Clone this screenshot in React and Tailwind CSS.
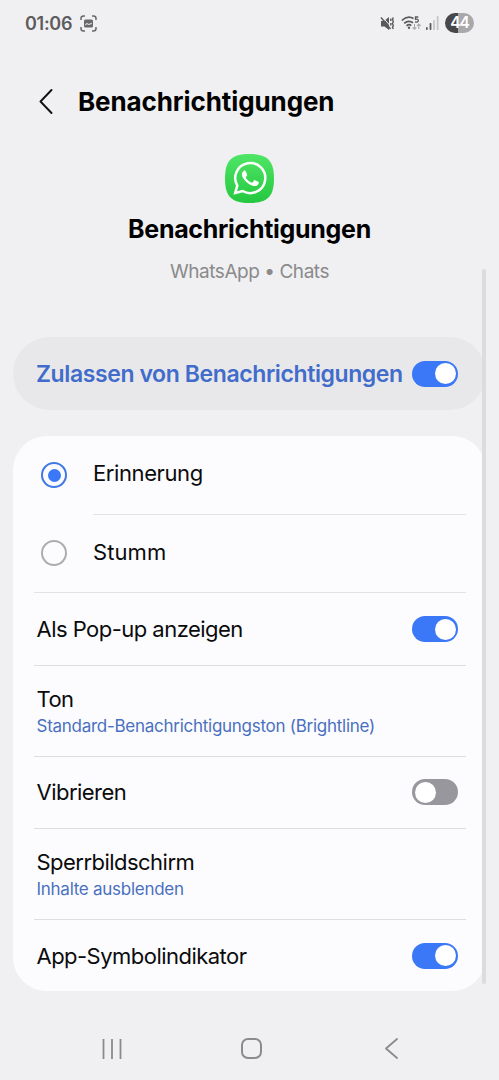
function Toggle({ on }) {
  return (
    <div
      className={
        on
          ? "flex h-[26px] w-[46px] shrink-0 items-center justify-end rounded-full bg-[#3a78f7] px-[2.5px]"
          : "flex h-[26px] w-[46px] shrink-0 items-center justify-start rounded-full bg-[#98979d] px-[2.5px]"
      }
    >
      <div className="size-[21px] rounded-full bg-white" />
    </div>
  );
}

function Radio({ checked }) {
  return checked ? (
    <div className="flex size-[26px] items-center justify-center rounded-full border-[2.5px] border-[#4079e6]">
      <div className="size-[13px] rounded-full bg-[#3a78f7]" />
    </div>
  ) : (
    <div className="size-[26px] rounded-full border-2 border-[#adadaf]" />
  );
}

function StatusBar() {
  return (
    <div className="flex h-[46px] items-center pl-[25px] pr-[25px]">
      <span className="w-[47px] whitespace-nowrap text-[18px] font-semibold tracking-[-0.3px] text-[#5c5c5e]">
        01:06
      </span>
      <svg className="ml-2 size-[17px]" viewBox="0 0 17 17" fill="none">
        <path
          d="M1 5V3.5Q1 1 3.5 1H5M12 1h1.500Q16 1 16 3.500V5M16 12v1.500Q16 16 13.500 16H12M5 16H3.500Q1 16 1 13.500V12"
          stroke="#68686a"
          strokeWidth="1.5"
        />
        <rect x="4" y="4.500" width="9" height="8" rx="1.500" fill="#68686a" />
        <path d="M5.300 10.500V9L7 8L9 9L11.700 7.500V9L9 10L7 9.300Z" fill="#e4e4e6" />
      </svg>
      <div className="ml-auto flex items-center">
        <svg className="h-[15px] w-[15px]" viewBox="0 0 15 15" fill="none">
          <path d="M1 5H4L9 1V14L4.500 10.500H1Z" fill="#59595b" />
          <path d="M2.500 1L9.500 9" stroke="#f0f0f2" strokeWidth="1" />
          <path d="M1 1.500L10.500 13" stroke="#59595b" strokeWidth="1.400" />
          <path d="M10.800 2.500v2.500M10.800 7v2.500M13.300 1.500l-.8 2 .8 2-.8 2 .8 2-.8 2 .8 1.500" stroke="#59595b" strokeWidth="1.400" />
        </svg>
        <svg className="ml-[6px] h-[16px] w-[20px]" viewBox="0 0 20 16" fill="none">
          <g stroke="#59595b" strokeWidth="1.700">
            <path d="M.8 5.500Q6.500 0 12.500 3.500M3.200 8.300Q7.500 4.500 12 7.800M5.500 10.800Q8 8.800 10.300 10.600" />
          </g>
          <circle cx="8" cy="12.800" r="1.200" fill="#59595b" />
          <path d="M17.300 2H14.500V4.300Q17.300 3.600 17.300 5.600T14 6.900" stroke="#59595b" strokeWidth="1.300" />
          <path d="M13.500 9V14M11.700 12.300l1.800 1.800 1.800-1.800M17.800 14V9M16 10.800l1.800-1.800 1.800 1.800" stroke="#a7a7a9" strokeWidth="1.100" />
        </svg>
        <svg className="ml-[5px] h-[14px] w-[13px]" viewBox="0 0 13 14">
          <rect x="0" y="11" width="1.700" height="3" rx=".7" fill="#59595b" />
          <rect x="3.600" y="7" width="1.800" height="7" rx=".7" fill="#59595b" />
          <rect x="7.200" y="4" width="1.700" height="10" rx=".7" fill="#c4c4c6" />
          <rect x="10.800" y="0" width="1.700" height="14" rx=".7" fill="#c4c4c6" />
        </svg>
        <div className="ml-[6px] flex h-5 w-[29px] items-center justify-center rounded-full bg-linear-to-r from-[#48484a] from-44% to-[#a9a9ab] to-44% text-[15.5px] font-semibold tracking-[-1px] text-white">
          44
        </div>
      </div>
    </div>
  );
}

function AppIcon() {
  return (
    <svg className="size-[49px]" viewBox="0 0 49 49" fill="none">
      <defs>
        <linearGradient id="green" x1="0" y1="0" x2="0" y2="1">
          <stop stopColor="#4fe566" />
          <stop offset="1" stopColor="#25c840" />
        </linearGradient>
      </defs>
      <path
        d="M24.500 0C42.500 0 49 6.500 49 24.500S42.500 49 24.500 49 0 42.500 0 24.500 6.500 0 24.500 0Z"
        fill="url(#green)"
      />
      <path
        d="M10.200 38.900L12.300 31.600A15 15 0 1 1 17.700 37Z"
        stroke="#fff"
        strokeWidth="2.500"
        strokeLinejoin="miter"
      />
      <path
        d="M18.600 17c.5-.5 1.700-.6 2.100.2l1.400 3.300c.3.900-.1 1.300-1.200 2.600-.2.300-.1.500.1.800 1.400 2.300 3.100 3.700 5.500 4.700.4.200.7.100 1-.2l1.500-1.900c.3-.4.600-.5 1-.3l3.300 1.600c.5.300.6.500.5 1-.2 1.900-1.600 3-3.500 3.200-1.700.2-4.100-.7-6.700-2.300-3.100-2-6.400-5.900-6.700-8.900-.2-1.600.7-3 1.700-3.800Z"
        fill="#fff"
      />
    </svg>
  );
}

function SettingRow({ title, subtitle, className, children }) {
  return (
    <div className={`flex items-center justify-between pl-[2.5px] pr-2 ${className}`}>
      <div className={subtitle ? "whitespace-nowrap pt-1" : "whitespace-nowrap pt-px"}>
        <div className="text-[22px] leading-[27px] tracking-[-0.53px] text-[#0b0b0c]">{title}</div>
        {subtitle && (
          <div className="text-[17px] leading-[27px] tracking-[-0.27px] text-[#4a70bf]">
            {subtitle}
          </div>
        )}
      </div>
      {children}
    </div>
  );
}

export default function App() {
  return (
    <div className="relative flex h-[1080px] w-[499px] flex-col overflow-hidden bg-[#f0f0f2] font-['Inter',sans-serif]">
      <StatusBar />

      <div className="flex h-[108px] items-center pl-[39px] pt-0.5">
        <svg className="h-[25px] w-[14px]" viewBox="0 0 14 25" fill="none">
          <path d="M12.500 1L1.500 12.500L12.500 24" stroke="#111" strokeWidth="1.900" strokeLinecap="round" strokeLinejoin="round" />
        </svg>
        <h1 className="ml-[25px] whitespace-nowrap text-[26px] font-bold tracking-[-0.1px] text-black">
          Benachrichtigungen
        </h1>
      </div>

      <div className="flex h-[183px] flex-col items-center">
        <AppIcon />
        <h2 className="mt-2 whitespace-nowrap text-[25px] leading-9 font-bold tracking-[-0.3px] text-black">
          Benachrichtigungen
        </h2>
        <p className="mt-[11px] whitespace-nowrap text-[19px] leading-7 tracking-[-0.45px] text-[#8a8a8c]">
          WhatsApp • Chats
        </p>
      </div>

      <div className="mx-[13px] flex h-[73px] shrink-0 items-center justify-between rounded-full bg-[#e8e8ea] pl-[23px] pr-[28px]">
        <span className="whitespace-nowrap pt-0.5 text-[23px] font-semibold tracking-[-0.4px] text-[#416ccb]">
          Zulassen von Benachrichtigungen
        </span>
        <Toggle on />
      </div>

      <div className="mx-[13px] mt-[26px] flex h-[555px] shrink-0 flex-col rounded-[34px] bg-[#fcfcfe] pl-[21px] pr-5">
        <div className="flex h-[78px] items-center pl-[7px]">
          <Radio checked />
          <span className="ml-[26px] pb-[3px] text-[22px] tracking-[-0.4px] text-[#0b0b0c]">
            Erinnerung
          </span>
        </div>
        <div className="flex h-[79px] items-center border-b-[1.5px] border-[#e3e3e5] pl-[7px]">
          <Radio />
          <div className="ml-[26px] flex h-full flex-1 items-center border-t-[1.5px] border-[#e3e3e5] pb-[3px] text-[22px] tracking-[0.1px] text-[#0b0b0c]">
            Stumm
          </div>
        </div>
        <SettingRow title="Als Pop-up anzeigen" className="h-[73px] border-b border-[#dedee0]">
          <Toggle on />
        </SettingRow>
        <SettingRow
          title="Ton"
          subtitle="Standard-Benachrichtigungston (Brightline)"
          className="h-[91px] border-b border-[#dedee0]"
        />
        <SettingRow title="Vibrieren" className="h-[72px] border-b border-[#dedee0] pb-px">
          <Toggle />
        </SettingRow>
        <SettingRow
          title="Sperrbildschirm"
          subtitle="Inhalte ausblenden"
          className="h-[91px] border-b border-[#dedee0]"
        />
        <SettingRow title="App-Symbolindikator" className="h-[71px]">
          <Toggle on />
        </SettingRow>
      </div>

      <div className="flex flex-1 items-center pl-[102px] pt-[26px]">
        <svg className="h-5 w-5" viewBox="0 0 20 20" fill="none">
          <path d="M1.500 0V20M10 0V20M18.500 0V20" stroke="#8b8b8d" strokeWidth="1.800" />
        </svg>
        <div className="ml-[119px] size-[21px] rounded-[7px] border-2 border-[#8b8b8d]" />
        <svg className="ml-[123px] h-[21px] w-[13px]" viewBox="0 0 13 21" fill="none">
          <path d="M12 1L1 10.500L12 20" stroke="#8b8b8d" strokeWidth="1.800" strokeLinecap="round" strokeLinejoin="round" />
        </svg>
      </div>

      {/* scrollbar */}
      <div className="absolute top-[269px] left-[482px] h-[715px] w-1 rounded-full bg-[#dcdcde]" />
    </div>
  );
}
